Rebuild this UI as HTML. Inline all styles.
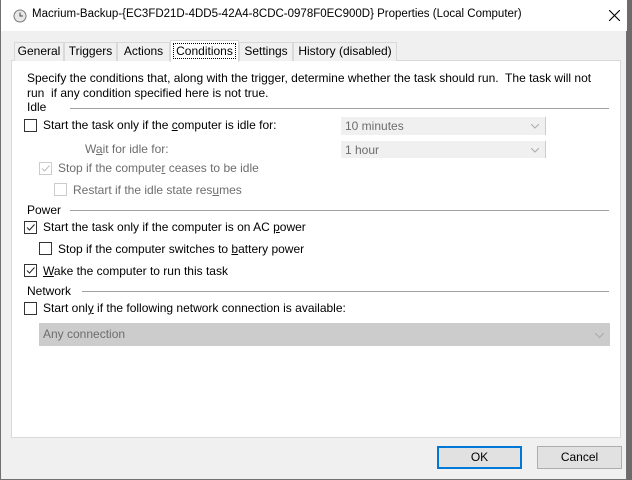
<!DOCTYPE html>
<html><head><style>
*{margin:0;padding:0;box-sizing:border-box}
body{width:632px;height:480px;background:#6b6b6b;font-family:"Liberation Sans",sans-serif;font-size:12px;color:#000;position:relative;overflow:hidden}
.win{position:absolute;left:0;top:0;width:627px;height:480px;background:#f0f0f0;border-left:1px solid #707070;border-right:1px solid #707070;border-bottom:1px solid #707070}
.title{position:absolute;left:0;top:0;width:626px;height:31px;background:#fff}
.abs{position:absolute;white-space:nowrap}
.tab{position:absolute;top:42px;height:19px;border:1px solid #d9d9d9;border-bottom:none;background:#f0f0f0;text-align:center;line-height:17px}
.panel{position:absolute;left:10px;top:60px;width:610px;height:378px;background:#fff;border:1px solid #d9d9d9}
.cb{position:absolute;width:13px;height:13px;border:1px solid #333;background:#fff}
.cb.dis{border-color:#ccc}
.sep{position:absolute;height:1px;background:#a0a0a0}
.dd{position:absolute;background:#f0f0f0;color:#6d6d6d;padding-left:4px;line-height:18px}
.dd svg{position:absolute;right:6px;top:50%;margin-top:-2px}
.btn{position:absolute;top:446px;height:23px;background:#e1e1e1;border:1px solid #adadad;text-align:center;line-height:21px}
u{text-decoration:underline}
.g{color:#6d6d6d}
</style></head><body>
<div class="win">
<div class="title"></div>
<svg class="abs" style="left:12px;top:9px" width="14" height="14" viewBox="0 0 14 14"><circle cx="7" cy="7" r="6" fill="#e8e8e8" stroke="#777"/><path d="M7 3.5V7h3" stroke="#444" fill="none"/></svg>
<div class="abs" style="left:31px;top:8px;font-size:11.5px">Macrium-Backup-{EC3FD21D-4DD5-42A4-8CDC-0978F0EC900D} Properties (Local Computer)</div>
<svg class="abs" style="left:608px;top:10px" width="11" height="11"><path d="M0 0L11 11M11 0L0 11" stroke="#000" stroke-width="1.1"/></svg>

<div class="panel"></div>
<div class="tab" style="left:13px;width:50px">General</div>
<div class="tab" style="left:63px;width:53px">Triggers</div>
<div class="tab" style="left:116px;width:53px">Actions</div>
<div class="tab" style="left:238px;width:54px">Settings</div>
<div class="tab" style="left:292px;width:104px">History (disabled)</div>
<div class="tab" style="left:169px;top:40px;height:22px;width:69px;background:#fff;line-height:20px"><span style="outline:1px dotted #000;padding:0 2px">Conditions</span></div>

<div class="abs" style="left:26px;top:71px;line-height:15px">Specify the conditions that, along with the trigger, determine whether the task should run.&nbsp; The task will not<br>run&nbsp; if any condition specified here is not true.</div>
<div class="abs" style="left:26px;top:100px">Idle</div>
<div class="sep" style="left:69px;top:108px;width:539px"></div>
<div class="cb" style="left:23px;top:119px"></div>
<div class="abs" style="left:42px;top:118px">Start the task only if the <u>c</u>omputer is idle for:</div>
<div class="dd" style="left:340px;top:117px;width:205px;height:18px;border-right:1px solid #ccc">10 minutes<svg width="8" height="5"><path d="M0 0L4 4L8 0" stroke="#aaa" fill="none"/></svg></div>
<div class="abs g" style="left:84px;top:142px">W<u>a</u>it for idle for:</div>
<div class="dd" style="left:340px;top:141px;width:205px;height:17px;border-right:1px solid #ccc">1 hour<svg width="8" height="5"><path d="M0 0L4 4L8 0" stroke="#aaa" fill="none"/></svg></div>
<div class="cb dis" style="left:38px;top:162px"><svg width="11" height="11" style="position:absolute;left:0;top:0"><path d="M2 5.5L4.5 8L9.5 2.5" stroke="#bbb" fill="none"/></svg></div>
<div class="abs g" style="left:57px;top:161px">Stop if the compute<u>r</u> ceases to be idle</div>
<div class="cb dis" style="left:53px;top:183px"></div>
<div class="abs g" style="left:72px;top:183px">Restart if the idle state res<u>u</u>mes</div>

<div class="abs" style="left:26px;top:203px">Power</div>
<div class="sep" style="left:69px;top:210px;width:539px"></div>
<div class="cb" style="left:23px;top:221px"><svg width="11" height="11" style="position:absolute;left:0;top:0"><path d="M2 5.5L4.5 8L9.5 2.5" stroke="#222" fill="none"/></svg></div>
<div class="abs" style="left:42px;top:220px">Start the task only if the computer is on AC <u>p</u>ower</div>
<div class="cb" style="left:38px;top:242px"></div>
<div class="abs" style="left:57px;top:242px">Stop if the computer switches to <u>b</u>attery power</div>
<div class="cb" style="left:23px;top:264px"><svg width="11" height="11" style="position:absolute;left:0;top:0"><path d="M2 5.5L4.5 8L9.5 2.5" stroke="#222" fill="none"/></svg></div>
<div class="abs" style="left:42px;top:264px"><u>W</u>ake the computer to run this task</div>

<div class="abs" style="left:26px;top:284px">Network</div>
<div class="sep" style="left:81px;top:291px;width:527px"></div>
<div class="cb" style="left:23px;top:302px"></div>
<div class="abs" style="left:42px;top:301px">Start onl<u>y</u> if the following network connection is available:</div>
<div class="dd" style="left:38px;top:323px;width:571px;height:23px;background:#cccccc;line-height:23px">Any connection<svg width="9" height="5"><path d="M0 0L4.5 4.5L9 0" stroke="#aaa" fill="none"/></svg></div>

<div class="btn" style="left:436px;width:85px;border:2px solid #0078d7;line-height:19px">OK</div>
<div class="btn" style="left:536px;width:85px">Cancel</div>
</div>
</body></html>
